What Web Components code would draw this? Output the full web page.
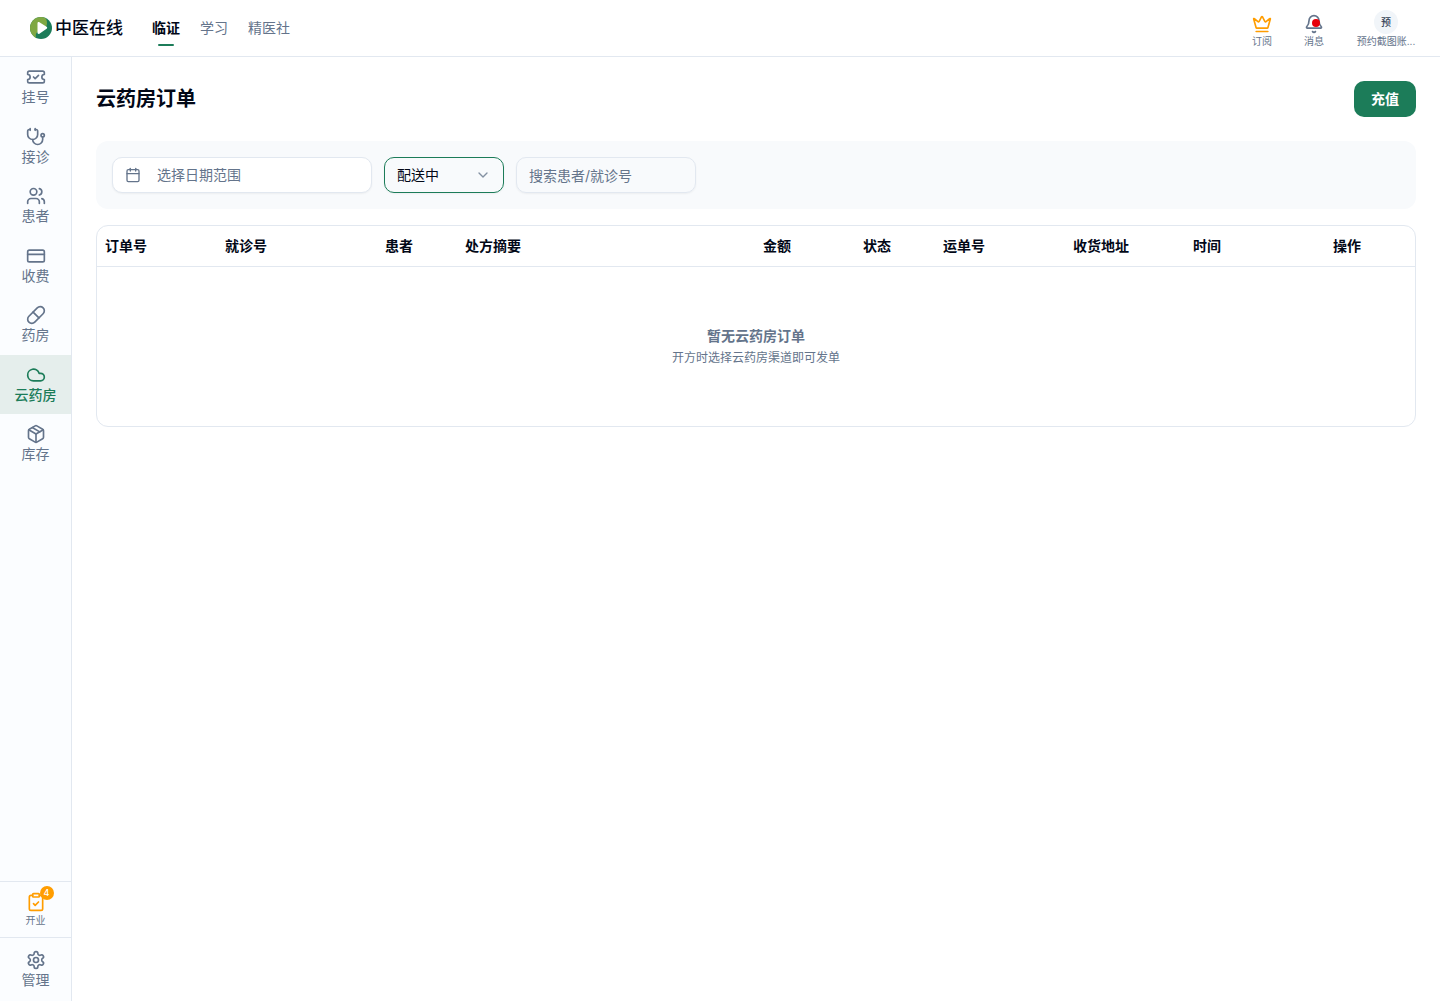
<!DOCTYPE html>
<html lang="zh-CN">
<head>
<meta charset="UTF-8">
<meta name="viewport" content="width=device-width, initial-scale=1.0">
<title>云药房订单</title>
<style>
    :root {
        --primary: #1c7c59;
        --text: #020817;
        --muted: #64748b;
        --line: #e2e8f0;
        --surface: #f8fafc;
        --warn: #ff9d00;
    }

    body {
        margin: 0;
        background: #fff;
        color: var(--text);
        font-family: Inter, "Noto Sans CJK SC", sans-serif;
        font-size: 14px;
        line-height: 20px;
    }
</style>
</head>
<body>
<app-shell>
    <top-bar slot="header"></top-bar>
    <side-nav slot="aside"></side-nav>
    <page-header>
        云药房订单
        <app-button slot="action">充值</app-button>
    </page-header>
    <filter-bar></filter-bar>
    <order-table>
        <span slot="empty-title">暂无云药房订单</span>
        <span slot="empty-hint">开方时选择云药房渠道即可发单</span>
    </order-table>
</app-shell>

<script>
const ICONS = {
    ticket: `<path d="M2 9a3 3 0 0 1 0 6v2a2 2 0 0 0 2 2h16a2 2 0 0 0 2-2v-2a3 3 0 0 1 0-6V7a2 2 0 0 0-2-2H4a2 2 0 0 0-2 2Z"/><path d="m9 12 2 2 4-4"/>`,
    stethoscope: `<path d="M11 2v2"/><path d="M5 2v2"/><path d="M5 3H4a2 2 0 0 0-2 2v4a6 6 0 0 0 12 0V5a2 2 0 0 0-2-2h-1"/><path d="M8 15a6 6 0 0 0 12 0v-3"/><circle cx="20" cy="10" r="2"/>`,
    users: `<path d="M16 21v-2a4 4 0 0 0-4-4H6a4 4 0 0 0-4 4v2"/><circle cx="9" cy="7" r="4"/><path d="M22 21v-2a4 4 0 0 0-3-3.87"/><path d="M16 3.13a4 4 0 0 1 0 7.75"/>`,
    card: `<rect width="20" height="14" x="2" y="5" rx="2"/><path d="M2 10h20"/>`,
    pill: `<path d="m10.5 20.5 10-10a4.95 4.95 0 1 0-7-7l-10 10a4.95 4.95 0 1 0 7 7Z"/><path d="m8.5 8.5 7 7"/>`,
    cloud: `<path d="M17.5 19H9a7 7 0 1 1 6.71-9h1.79a4.5 4.5 0 1 1 0 9Z"/>`,
    box: `<path d="M11 21.73a2 2 0 0 0 2 0l7-4A2 2 0 0 0 21 16V8a2 2 0 0 0-1-1.73l-7-4a2 2 0 0 0-2 0l-7 4A2 2 0 0 0 3 8v8a2 2 0 0 0 1 1.73z"/><path d="M12 22V12"/><path d="M3.29 7 12 12l8.71-5"/><path d="m7.5 4.27 9 5.15"/>`,
    clipboard: `<rect width="8" height="4" x="8" y="2" rx="1"/><path d="M16 4h2a2 2 0 0 1 2 2v14a2 2 0 0 1-2 2H6a2 2 0 0 1-2-2V6a2 2 0 0 1 2-2h2"/><path d="m9 14 2 2 4-4"/>`,
    settings: `<path d="M12.22 2h-.44a2 2 0 0 0-2 2v.18a2 2 0 0 1-1 1.73l-.43.25a2 2 0 0 1-2 0l-.15-.08a2 2 0 0 0-2.73.73l-.22.38a2 2 0 0 0 .73 2.73l.15.1a2 2 0 0 1 1 1.72v.51a2 2 0 0 1-1 1.74l-.15.09a2 2 0 0 0-.73 2.73l.22.38a2 2 0 0 0 2.73.73l.15-.08a2 2 0 0 1 2 0l.43.25a2 2 0 0 1 1 1.73V20a2 2 0 0 0 2 2h.44a2 2 0 0 0 2-2v-.18a2 2 0 0 1 1-1.73l.43-.25a2 2 0 0 1 2 0l.15.08a2 2 0 0 0 2.73-.73l.22-.39a2 2 0 0 0-.73-2.73l-.15-.08a2 2 0 0 1-1-1.74v-.5a2 2 0 0 1 1-1.74l.15-.09a2 2 0 0 0 .73-2.73l-.22-.38a2 2 0 0 0-2.73-.73l-.15.08a2 2 0 0 1-2 0l-.43-.25a2 2 0 0 1-1-1.73V4a2 2 0 0 0-2-2z"/><circle cx="12" cy="12" r="3"/>`,
    crown: `<path d="M11.562 3.266a.5.5 0 0 1 .876 0L15.39 8.87a1 1 0 0 0 1.516.294L21.183 5.5a.5.5 0 0 1 .798.519l-2.834 10.246a1 1 0 0 1-.956.734H5.81a1 1 0 0 1-.957-.734L2.02 6.02a.5.5 0 0 1 .798-.519l4.276 3.664a1 1 0 0 0 1.516-.294z"/><path d="M5 21h14"/>`,
    bell: `<path d="M10.268 21a2 2 0 0 0 3.464 0"/><path d="M3.262 15.326A1 1 0 0 0 4 17h16a1 1 0 0 0 .74-1.673C19.41 13.956 18 12.499 18 8A6 6 0 0 0 6 8c0 4.499-1.411 5.956-2.738 7.326"/>`,
    calendar: `<path d="M8 2v4"/><path d="M16 2v4"/><rect width="18" height="18" x="3" y="4" rx="2"/><path d="M3 10h18"/>`,
    chevron: `<path d="m6 9 6 6 6-6"/>`
};

class AppIcon extends HTMLElement {
    constructor() {
        super();
        this.attachShadow({mode: 'open'});
    }

    connectedCallback() {
        this.shadowRoot.innerHTML = `
        <style>
            :host {
                display: block;
                flex: none;
                width: var(--icon-size, 20px);
                height: var(--icon-size, 20px);
            }
            svg {
                display: block;
                width: 100%;
                height: 100%;
                fill: none;
                stroke: currentColor;
                stroke-width: 2;
                stroke-linecap: round;
                stroke-linejoin: round;
            }
        </style>
        <svg viewBox="0 0 24 24" aria-hidden="true">${ICONS[this.getAttribute('name')] || ''}</svg>
        `;
    }
}

class AppShell extends HTMLElement {
    constructor() {
        super();
        this.attachShadow({mode: 'open'});
        this.shadowRoot.innerHTML = `
        <style>
            :host {
                display: grid;
                grid-template-columns: 72px minmax(0, 1fr);
                grid-template-rows: auto 1fr;
                min-height: 100vh;
            }
            ::slotted([slot="header"]) {
                grid-column: 1 / -1;
            }
            main {
                display: flex;
                flex-direction: column;
                padding: 24px;
            }
        </style>
        <slot name="header"></slot>
        <slot name="aside"></slot>
        <main><slot></slot></main>
        `;
    }
}

class BrandLogo extends HTMLElement {
    constructor() {
        super();
        this.attachShadow({mode: 'open'});
        this.shadowRoot.innerHTML = `
        <style>
            :host {
                display: block;
            }
            a {
                display: flex;
                align-items: center;
                gap: 3px;
                color: inherit;
                font-size: 17px;
                font-weight: 500;
                line-height: 24px;
                text-decoration: none;
            }
            svg {
                width: 22px;
                height: 22px;
            }
        </style>
        <a href="#">
            <svg viewBox="0 0 22 22" aria-hidden="true">
                <clipPath id="disc"><circle cx="11" cy="11" r="11"/></clipPath>
                <g clip-path="url(#disc)">
                    <path d="M0 0h22v22H0Z" fill="#1c7c59"/>
                    <path d="M0 0h14c2 1 3 3 3 6 0 5-4 8-8 8.500-3 .5-4 3-2.500 7.500H0Z" fill="#7fa843"/>
                </g>
                <path d="M7.500 6.200c0-1 1-1.500 1.900-1l7.200 4.600c.8.500.8 1.500 0 2l-7.200 4.900c-.9.500-1.900 0-1.900-1Z" fill="#fff"/>
            </svg>
            <span>中医在线</span>
        </a>
        `;
    }
}

class TopBar extends HTMLElement {
    constructor() {
        super();
        this.attachShadow({mode: 'open'});
    }

    connectedCallback() {
        this.shadowRoot.innerHTML = `
        <style>
            :host {
                display: block;
                border-bottom: 1px solid var(--line);
            }
            header {
                display: flex;
                align-items: center;
                height: 56px;
                padding: 0 24px 0 30px;
            }
            nav {
                display: flex;
                gap: 20px;
                margin-left: 29px;
            }
            nav a {
                position: relative;
                color: var(--muted);
                text-decoration: none;
            }
            nav a[aria-current] {
                color: var(--text);
                font-weight: 600;
            }
            nav a[aria-current]::after {
                content: "";
                position: absolute;
                left: 50%;
                bottom: -8px;
                width: 16px;
                height: 2px;
                margin-left: -8px;
                border-radius: 1px;
                background: var(--primary);
            }
            .tools {
                display: flex;
                gap: 32px;
                margin-left: auto;
            }
            button {
                display: flex;
                flex-direction: column;
                align-items: center;
                justify-content: flex-end;
                padding: 2px 0 0;
                border: 0;
                background: none;
                color: var(--muted);
                font: inherit;
                font-size: 10px;
                line-height: 14px;
                cursor: pointer;
            }
            .icon {
                position: relative;
            }
            .vip app-icon {
                color: var(--warn);
            }
            .dot {
                position: absolute;
                top: 5px;
                right: 4px;
                width: 8px;
                height: 8px;
                border-radius: 50%;
                background: #e7000b;
            }
            .avatar {
                width: 24px;
                border-radius: 50%;
                background: #f1f5f9;
                color: #334155;
                font-weight: 500;
                line-height: 24px;
            }
            .name {
                width: 60px;
                overflow: hidden;
                white-space: nowrap;
            }
        </style>
        <header>
            <brand-logo></brand-logo>
            <nav>
                <a href="#" aria-current="page">临证</a>
                <a href="#">学习</a>
                <a href="#">精医社</a>
            </nav>
            <div class="tools">
                <button type="button" class="vip"><span class="icon"><app-icon name="crown"></app-icon></span>订阅</button>
                <button type="button"><span class="icon"><app-icon name="bell"></app-icon><span class="dot"></span></span>消息</button>
                <button type="button"><span class="avatar">预</span><span class="name">预约截图账...</span></button>
            </div>
        </header>
        `;
    }
}

class NavItem extends HTMLElement {
    constructor() {
        super();
        this.attachShadow({mode: 'open'});
    }

    connectedCallback() {
        const active = this.hasAttribute('active');
        this.shadowRoot.innerHTML = `
        <style>
            :host {
                display: grid;
                color: var(--muted);
            }
            :host([active]) {
                background: #e5eeec;
                color: var(--primary);
                font-weight: 500;
            }
            a {
                display: flex;
                flex-direction: column;
                align-items: center;
                padding: 10px 0 9px;
                color: inherit;
                text-decoration: none;
            }
        </style>
        <a href="#" ${active ? 'aria-current="page"' : ''}>
            <app-icon name="${this.getAttribute('icon')}"></app-icon>
            <slot></slot>
        </a>
        `;
    }
}

class SideNav extends HTMLElement {
    constructor() {
        super();
        this.attachShadow({mode: 'open'});
    }

    connectedCallback() {
        this.shadowRoot.innerHTML = `
        <style>
            :host {
                display: flex;
                flex-direction: column;
                border-right: 1px solid var(--line);
                background: #fbfdff;
            }
            nav {
                display: grid;
                grid-auto-rows: minmax(60px, auto) minmax(59px, auto);
            }
            .setup {
                display: flex;
                flex-direction: column;
                align-items: center;
                margin-top: auto;
                padding: 10px 0 9px;
                border: solid var(--line);
                border-width: 1px 0;
                color: var(--muted);
                font-size: 10px;
                line-height: 16px;
                text-decoration: none;
            }
            .icon {
                position: relative;
                color: var(--warn);
            }
            .badge {
                position: absolute;
                top: -6px;
                right: -8px;
                width: 14px;
                border-radius: 50%;
                background: var(--warn);
                color: #fff;
                font-size: 9px;
                font-weight: 500;
                line-height: 14px;
                text-align: center;
            }
            .manage {
                padding: 2px 0;
            }
        </style>
        <nav>
            <nav-item icon="ticket">挂号</nav-item>
            <nav-item icon="stethoscope">接诊</nav-item>
            <nav-item icon="users">患者</nav-item>
            <nav-item icon="card">收费</nav-item>
            <nav-item icon="pill">药房</nav-item>
            <nav-item icon="cloud" active>云药房</nav-item>
            <nav-item icon="box">库存</nav-item>
        </nav>
        <a class="setup" href="#">
            <span class="icon"><app-icon name="clipboard"></app-icon><span class="badge">4</span></span>
            开业
        </a>
        <nav-item class="manage" icon="settings">管理</nav-item>
        `;
    }
}

class AppButton extends HTMLElement {
    constructor() {
        super();
        this.attachShadow({mode: 'open'});
        this.shadowRoot.innerHTML = `
        <style>
            :host {
                display: block;
            }
            button {
                padding: 8px 17px;
                border: 0;
                border-radius: 10px;
                background: var(--primary);
                color: #fff;
                font: inherit;
                font-size: 14px;
                font-weight: 700;
                line-height: 20px;
                cursor: pointer;
            }
        </style>
        <button type="button"><slot></slot></button>
        `;
    }
}

class PageHeader extends HTMLElement {
    constructor() {
        super();
        this.attachShadow({mode: 'open'});
        this.shadowRoot.innerHTML = `
        <style>
            :host {
                display: flex;
                align-items: center;
                justify-content: space-between;
                margin-bottom: 24px;
            }
            h1 {
                margin: 0;
                font-size: 20px;
                font-weight: 600;
                line-height: 28px;
            }
        </style>
        <h1><slot></slot></h1>
        <slot name="action"></slot>
        `;
    }
}

class FilterBar extends HTMLElement {
    constructor() {
        super();
        this.attachShadow({mode: 'open'});
    }

    connectedCallback() {
        this.shadowRoot.innerHTML = `
        <style>
            :host {
                display: block;
                margin-bottom: 16px;
            }
            form {
                display: flex;
                flex-wrap: wrap;
                gap: 12px;
                padding: 16px;
                border-radius: 12px;
                background: var(--surface);
            }
            button, select, input {
                box-sizing: border-box;
                height: 36px;
                margin: 0;
                padding: 0 12px;
                border: 1px solid var(--line);
                border-radius: 10px;
                box-shadow: 0 1px 2px rgba(0, 0, 0, 0.05);
                font: inherit;
            }
            .date {
                display: flex;
                align-items: center;
                gap: 16px;
                width: 260px;
                background: #fff;
                color: var(--muted);
                --icon-size: 16px;
            }
            .status {
                position: relative;
                width: 120px;
            }
            select {
                appearance: none;
                width: 100%;
                border-color: var(--primary);
                background: transparent;
                color: var(--text);
            }
            .status app-icon {
                position: absolute;
                top: 10px;
                right: 13px;
                color: #8390a2;
                pointer-events: none;
                --icon-size: 16px;
            }
            input {
                width: 180px;
                background: transparent;
                color: var(--text);
            }
            input::placeholder {
                color: var(--muted);
                opacity: 1;
            }
        </style>
        <form>
            <button type="button" class="date"><app-icon name="calendar"></app-icon>选择日期范围</button>
            <div class="status">
                <select aria-label="状态">
                    <option>配送中</option>
                </select>
                <app-icon name="chevron"></app-icon>
            </div>
            <input type="text" placeholder="搜索患者/就诊号" aria-label="搜索患者/就诊号">
        </form>
        `;
    }
}

class OrderTable extends HTMLElement {

    // a column without a width takes what is left
    #columns = [
        {title: '订单号', width: 120},
        {title: '就诊号', width: 160},
        {title: '患者', width: 80},
        {title: '处方摘要'},
        {title: '金额', width: 100},
        {title: '状态', width: 80},
        {title: '运单号', width: 130},
        {title: '收货地址', width: 120},
        {title: '时间', width: 140},
        {title: '操作', width: 90}
    ];

    constructor() {
        super();
        this.attachShadow({mode: 'open'});
    }

    connectedCallback() {
        const cols = this.#columns.map(c => c.width ? `<col style="width: ${c.width}px">` : `<col>`).join('');
        const heads = this.#columns.map(c => `<th scope="col">${c.title}</th>`).join('');

        this.shadowRoot.innerHTML = `
        <style>
            :host {
                display: block;
                border: 1px solid var(--line);
                border-radius: 12px;
                overflow: hidden;
            }
            table {
                width: 100%;
                table-layout: fixed;
                border-collapse: separate;
                border-spacing: 0;
            }
            th {
                padding: 10px 8px;
                border-bottom: 1px solid var(--line);
                font-weight: 600;
                text-align: left;
            }
            td {
                padding: 59px 8px 60px;
                color: var(--muted);
                text-align: center;
            }
            .title {
                font-weight: 600;
                margin-bottom: 4px;
            }
            .hint {
                font-size: 12px;
                line-height: 16px;
            }
        </style>
        <table>
            <colgroup>${cols}</colgroup>
            <thead><tr>${heads}</tr></thead>
            <tbody>
                <tr>
                    <td colspan="${this.#columns.length}">
                        <div class="title"><slot name="empty-title"></slot></div>
                        <div class="hint"><slot name="empty-hint"></slot></div>
                    </td>
                </tr>
            </tbody>
        </table>
        `;
    }
}

customElements.define('app-icon', AppIcon);
customElements.define('app-shell', AppShell);
customElements.define('brand-logo', BrandLogo);
customElements.define('top-bar', TopBar);
customElements.define('nav-item', NavItem);
customElements.define('side-nav', SideNav);
customElements.define('app-button', AppButton);
customElements.define('page-header', PageHeader);
customElements.define('filter-bar', FilterBar);
customElements.define('order-table', OrderTable);
</script>
</body>
</html>
